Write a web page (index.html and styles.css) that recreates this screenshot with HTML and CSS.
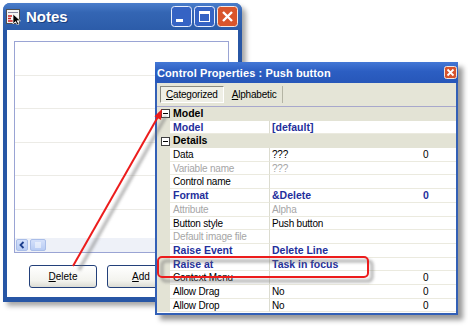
FILE: index.html
```html
<!DOCTYPE html>
<html lang="en">
  <head>
    <meta charset="utf-8" />
    <title>Notes - Control Properties</title>
    <link rel="stylesheet" href="styles.css">
  </head>
  <body>
    <div class="desk">
      <section class="notes">
        <header class="notes-title">
          <svg class="app-icon" width="16" height="16" viewBox="0 0 16 16">
            <rect x="0.5" y="0.5" width="13" height="14" fill="#f4f4f4" stroke="#505050" />
            <rect x="2" y="3" width="10" height="1" fill="#8a8aa0" />
            <path d="M2 7h4M2 9.5h3M2 12h5" stroke="#d02020" stroke-width="1.4" />
            <path d="M7 5v10l2.5-2.5 2 3.5 1.5-1-2-3.2h3.5z" fill="#000" stroke="#fff" stroke-width="0.7" />
          </svg>
          <span class="notes-name">Notes</span>
          <div class="caption-btns">
            <svg width="21" height="21" viewBox="0 0 21 21">
              <rect x="0.5" y="0.5" width="20" height="20" rx="3" fill="#3563c4" stroke="#e8eefc" />
              <rect x="5" y="13" width="7" height="3" fill="#fff" />
            </svg>
            <svg width="21" height="21" viewBox="0 0 21 21">
              <rect x="0.5" y="0.5" width="20" height="20" rx="3" fill="#3563c4" stroke="#e8eefc" />
              <rect x="5.5" y="5.5" width="10" height="10" fill="none" stroke="#fff" />
              <rect x="5" y="5" width="11" height="3" fill="#fff" />
            </svg>
            <svg width="21" height="21" viewBox="0 0 21 21">
              <rect x="0.5" y="0.5" width="20" height="20" rx="3" fill="#d9552b" stroke="#f4e8e4" />
              <path d="M6 6l9 9M15 6l-9 9" stroke="#fff" stroke-width="2.4" />
            </svg>
          </div>
        </header>
        <div class="notes-client">
          <div class="listbox">
            <div class="lrows">
              <div class="lrow"></div>
              <div class="lrow"></div>
              <div class="lrow"></div>
              <div class="lrow"></div>
              <div class="lrow"></div>
              <div class="lrow"></div>
            </div>
            <div class="hscroll">
              <span class="sbtn">
                <svg width="10" height="10" viewBox="0 0 10 10"><path d="M6.5 2L3.5 5l3 3" fill="none" stroke="#1d3e8c" stroke-width="1.8" /></svg>
              </span>
              <span class="sbtn thumb">
                <svg width="10" height="10" viewBox="0 0 10 10"><path d="M3 2v6M5 2v6M7 2v6" stroke="#fff" stroke-width="1" /></svg>
              </span>
            </div>
          </div>
          <div class="btn-row">
            <button class="xpbtn"><u>D</u>elete</button>
            <button class="xpbtn"><u>A</u>dd</button>
          </div>
        </div>
      </section>

      <section class="props">
        <header class="props-title">
          <span>Control Properties : Push button</span>
          <svg class="tclose" width="13" height="13" viewBox="0 0 13 13">
            <rect x="0.5" y="0.5" width="12" height="12" rx="2" fill="#d6532c" stroke="#f0e6e0" />
            <path d="M3.5 3.5l6 6M9.5 3.5l-6 6" stroke="#fff" stroke-width="1.8" />
          </svg>
        </header>
        <div class="tabs">
          <span class="tab on"><u>C</u>ategorized</span>
          <span class="tab"><u>A</u>lphabetic</span>
        </div>
        <div class="grid">
          <div class="grow gcat"><span class="gut"><i class="minus"></i></span><span class="cat">Model</span></div>
          <div class="grow"><span class="gut"></span><span class="nm mod">Model</span><span class="val mod">[default]</span><span class="num"></span></div>
          <div class="grow gcat"><span class="gut"><i class="minus"></i></span><span class="cat">Details</span></div>
          <div class="grow"><span class="gut"></span><span class="nm">Data</span><span class="val">???</span><span class="num">0</span></div>
          <div class="grow"><span class="gut"></span><span class="nm off">Variable name</span><span class="val off">???</span><span class="num"></span></div>
          <div class="grow"><span class="gut"></span><span class="nm">Control name</span><span class="val"></span><span class="num"></span></div>
          <div class="grow"><span class="gut"></span><span class="nm mod">Format</span><span class="val mod">&amp;Delete</span><span class="num mod">0</span></div>
          <div class="grow"><span class="gut"></span><span class="nm off">Attribute</span><span class="val off">Alpha</span><span class="num"></span></div>
          <div class="grow"><span class="gut"></span><span class="nm">Button style</span><span class="val">Push button</span><span class="num"></span></div>
          <div class="grow"><span class="gut"></span><span class="nm off">Default image file</span><span class="val"></span><span class="num"></span></div>
          <div class="grow"><span class="gut"></span><span class="nm mod">Raise Event</span><span class="val mod">Delete Line</span><span class="num"></span></div>
          <div class="grow"><span class="gut"></span><span class="nm mod">Raise at</span><span class="val mod">Task in focus</span><span class="num"></span></div>
          <div class="grow"><span class="gut"></span><span class="nm">Context Menu</span><span class="val"></span><span class="num">0</span></div>
          <div class="grow"><span class="gut"></span><span class="nm">Allow Drag</span><span class="val">No</span><span class="num">0</span></div>
          <div class="grow"><span class="gut"></span><span class="nm">Allow Drop</span><span class="val">No</span><span class="num">0</span></div>
        </div>
      </section>

      <svg class="marks" width="468" height="326" viewBox="0 0 468 326">
        <defs>
          <filter id="soft" x="-20%" y="-20%" width="140%" height="140%">
            <feGaussianBlur stdDeviation="1.6" />
          </filter>
        </defs>
        <!-- drop shadows for the annotations -->
        <g filter="url(#soft)" opacity="0.55">
          <path d="M79 270L166 116" stroke="#707070" stroke-width="3" />
          <rect x="162" y="261" width="210" height="20" rx="4" fill="none" stroke="#707070" stroke-width="3" />
        </g>
        <path d="M73 266L159 115" stroke="#ec1c1c" stroke-width="2" />
        <path d="M162 109L161 120L154.5 116.3z" fill="#ec1c1c" />
        <rect x="158" y="257" width="210" height="20" rx="4" fill="none" stroke="#ec1c1c" stroke-width="2" />
      </svg>
    </div>
  </body>
</html>
```

FILE: styles.css
```css
body {
  margin: 0;
  font-family: "Liberation Sans", Arial, sans-serif;
}

.desk {
  position: relative;
  width: 468px;
  height: 326px;
  overflow: hidden;
  background: #fff;
}

/* Notes window */
.notes {
  position: absolute;
  left: 3px;
  top: 3px;
  box-sizing: border-box;
  width: 239px;
  height: 299px;
  display: flex;
  flex-direction: column;
  background: #2756a5;
  border-radius: 7px 7px 0 0;
  box-shadow: 4px 4px 5px rgba(0, 0, 0, 0.35);
}

.notes-title {
  height: 27px;
  display: flex;
  align-items: center;
  padding: 0 4px 0 3px;
  color: #fff;
  background: linear-gradient(#4a7dcb, #3466b4 35%, #2c5ca9);
  border-radius: 7px 7px 0 0;
}

.app-icon {
  margin-right: 4px;
}

.notes-name {
  font-size: 15px;
  font-weight: bold;
  text-shadow: 1px 1px 0 #1a3f80;
}

.caption-btns {
  margin-left: auto;
  display: flex;
  gap: 2px;
}

.caption-btns svg {
  display: block;
}

.notes-client {
  flex: 1;
  margin: 0 4px 5px;
  padding: 11px 9px 0 7px;
  background: #fff;
}

.listbox {
  box-sizing: border-box;
  height: 212px;
  display: flex;
  flex-direction: column;
  border: 1px solid #9aa4d4;
}

.lrows {
  flex: 1;
  overflow: hidden;
}

.lrow {
  box-sizing: border-box;
  height: 33.6px;
  border-bottom: 1px solid #ecebe6;
}

.hscroll {
  height: 14px;
  display: flex;
  gap: 2px;
  padding: 1px;
  box-sizing: border-box;
  background: #eef1f8;
}

.sbtn {
  width: 12px;
  height: 12px;
  display: flex;
  align-items: center;
  justify-content: center;
  box-sizing: border-box;
  background: linear-gradient(#d4e0fa, #b8ccf4);
  border: 1px solid #a9bde8;
  border-radius: 2px;
}

.sbtn.thumb {
  width: 16px;
}

.btn-row {
  display: flex;
  gap: 10px;
  margin-top: 12px;
  padding-left: 15px;
}

.xpbtn {
  width: 68px;
  height: 23px;
  padding: 0;
  font: 10px "Liberation Sans", Arial, sans-serif;
  color: #000;
  background: linear-gradient(#ffffff, #f3f3ee 70%, #dcdcd4);
  border: 1px solid #23407a;
  border-radius: 3px;
}

/* Control properties window */
.props {
  position: absolute;
  left: 155px;
  top: 62px;
  box-sizing: border-box;
  width: 303px;
  height: 253px;
  display: flex;
  flex-direction: column;
  background: #e5e5d7;
  border: 2px solid #3360b6;
  border-top: 0;
  box-shadow: 5px 5px 5px rgba(0, 0, 0, 0.4);
}

.props-title {
  height: 21px;
  flex: none;
  margin: 0 -2px;
  padding: 0 1px 0 2px;
  display: flex;
  align-items: center;
  font-size: 11px;
  font-weight: bold;
  letter-spacing: 0.1px;
  color: #fff;
  background: linear-gradient(#4478d6, #2c5ec2 45%, #2757b9);
}

.tclose {
  margin-left: auto;
  display: block;
}

.tabs {
  height: 23px;
  flex: none;
  display: flex;
  align-items: center;
  padding: 0 3px;
}

.tab {
  height: 17px;
  box-sizing: border-box;
  padding: 0 6px;
  display: flex;
  align-items: center;
  font-size: 10px;
  letter-spacing: -0.2px;
  border-right: 1px solid #b4b4a4;
}

.tab.on {
  padding: 0 5px;
  margin-right: 2px;
  background: #efefe6;
  border: 1px solid;
  border-color: #8a8a80 #ffffff #ffffff #8a8a80;
}

.grid {
  flex: 1;
  background: #fff;
  border-top: 1px solid #a8a8cc;
  overflow: hidden;
}

.grow {
  display: grid;
  grid-template-columns: 13px 100px 148px 1fr;
  height: 13.7px;
  line-height: 13.7px;
  font-size: 10px;
  letter-spacing: -0.2px;
  color: #000;
  white-space: nowrap;
}

.grow > span {
  box-sizing: border-box;
  overflow: hidden;
  border-bottom: 1px solid #ebeadf;
}

.grow > .gut {
  background: #e3e3d5;
  border-bottom: 0;
}

.nm {
  padding-left: 3px;
  border-right: 1px solid #dcdcd0;
}

.val {
  padding-left: 2px;
}

.num {
  padding-left: 5px;
}

.gcat {
  background: #e3e3d5;
}

.gcat .gut {
  display: flex;
  align-items: center;
  justify-content: flex-end;
}

.gcat .cat {
  grid-column: 2 / -1;
  padding-left: 3px;
  font-size: 10.5px;
  font-weight: bold;
  letter-spacing: 0;
  border-bottom: 0;
}

.minus {
  position: relative;
  width: 9px;
  height: 9px;
  box-sizing: border-box;
  border: 1px solid #404040;
  background: #fff;
}

.minus::after {
  content: "";
  position: absolute;
  left: 1px;
  right: 1px;
  top: 3px;
  height: 1px;
  background: #000;
}

.mod {
  font-size: 10.5px;
  font-weight: bold;
  letter-spacing: 0;
  color: #1f2f9c;
}

.off {
  color: #a6a6a6;
}

.marks {
  position: absolute;
  left: 0;
  top: 0;
  pointer-events: none;
}
```
